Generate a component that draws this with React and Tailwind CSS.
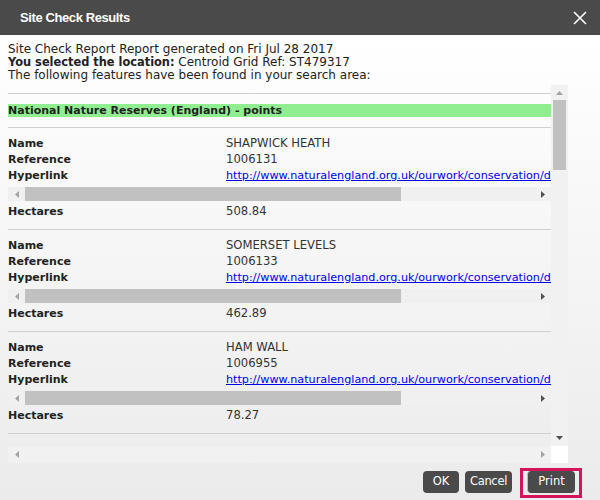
import React from "react";

const records = [
  { name: "SHAPWICK HEATH", reference: "1006131", hectares: "508.84" },
  { name: "SOMERSET LEVELS", reference: "1006133", hectares: "462.89" },
  { name: "HAM WALL", reference: "1006955", hectares: "78.27" },
];

const link =
  "http://www.naturalengland.org.uk/ourwork/conservation/designations/nnr/default.aspx";

const ArrowLeft = ({ color }) => (
  <svg width="4" height="7" viewBox="0 0 4 7">
    <polygon points="4,0 4,7 0,3.5" fill={color} />
  </svg>
);

const ArrowRight = ({ color }) => (
  <svg width="4" height="7" viewBox="0 0 4 7">
    <polygon points="0,0 0,7 4,3.5" fill={color} />
  </svg>
);

const Row = ({ label, children }) => (
  <div className="flex h-[16px] items-center whitespace-nowrap">
    <div className="w-[218px] shrink-0 text-[11px] font-bold text-[#222]">{label}</div>
    <div className="text-[11.6px] text-[#333]">{children}</div>
  </div>
);

const Record = ({ item }) => (
  <div>
    <div className="h-px bg-[#cfcfcf]" />
    <div className="pt-[8px]">
      <Row label="Name">{item.name}</Row>
      <Row label="Reference">{item.reference}</Row>
      <Row label="Hyperlink">
        <a href="#" className="text-[11.2px] text-[#0000ee] underline">
          {link}
        </a>
      </Row>
      {/* inner table scrollbar */}
      <div className="mt-[3px] flex h-[14px] items-center bg-[#f0f0f0]">
        <div className="flex w-[17px] justify-center">
          <ArrowLeft color="#a3a3a3" />
        </div>
        <div className="h-full w-[376px] bg-[#c1c1c1]" />
        <div className="flex-1" />
        <div className="flex w-[17px] justify-center">
          <ArrowRight color="#505050" />
        </div>
      </div>
      <div className="mt-[3px] mb-[9px]">
        <Row label="Hectares">{item.hectares}</Row>
      </div>
    </div>
  </div>
);

export default function App() {
  return (
    <div className="flex h-[500px] w-[600px] flex-col font-['DejaVu_Sans',sans-serif] text-[12px]">
      <div className="flex h-[35px] shrink-0 items-center justify-between bg-[#4a4a4a] pl-[20px] pr-[13px]">
        <span className="font-['Liberation_Sans',Arial,sans-serif] text-[13px] font-bold tracking-[-0.4px] text-white">
          Site Check Results
        </span>
        <svg width="14" height="14" viewBox="0 0 14 14">
          <path d="M1 1L13 13M13 1L1 13" stroke="#fff" strokeWidth="1.6" />
        </svg>
      </div>

      <div className="flex flex-1 flex-col bg-linear-to-b from-white to-[#ebebeb]">
        <div className="px-2 pt-2 leading-[13px] text-[#222]">
          <div>Site Check Report Report generated on Fri Jul 28 2017</div>
          <div>
            <span className="text-[11.4px] font-bold">You selected the location:</span> Centroid Grid Ref: ST479317
          </div>
          <div>The following features have been found in your search area:</div>
        </div>

        <div className="mx-2 mt-[3px] flex h-[378px] w-[560px] flex-col">
          <div className="flex h-[361px]">
            <div className="w-[543px] overflow-hidden pt-[8px]">
              <div className="h-px bg-[#cfcfcf]" />
              <div className="mt-[10px] h-[13px] bg-[#90ee90] text-[11px] font-bold leading-[13px] text-[#222]">
                National Nature Reserves (England) - points
              </div>
              <div className="mt-[10px]">
                {records.map((item) => (
                  <Record key={item.reference} item={item} />
                ))}
                <div className="h-px bg-[#cfcfcf]" />
              </div>
            </div>
            {/* vertical scrollbar */}
            <div className="flex w-[17px] flex-col items-center bg-[#f1f1f1]">
              <div className="flex h-[15px] items-center">
                <svg width="7" height="4" viewBox="0 0 7 4">
                  <polygon points="0,4 7,4 3.5,0" fill="#a3a3a3" />
                </svg>
              </div>
              <div className="h-[70px] w-[13px] bg-[#c1c1c1]" />
              <div className="flex-1" />
              <div className="flex h-[17px] items-center">
                <svg width="7" height="4" viewBox="0 0 7 4">
                  <polygon points="0,0 7,0 3.5,4" fill="#505050" />
                </svg>
              </div>
            </div>
          </div>
          <div className="flex h-[17px]">
            <div className="flex w-[543px] items-center bg-[#f1f1f1]">
              <div className="flex w-[17px] justify-center">
                <ArrowLeft color="#a3a3a3" />
              </div>
              <div className="flex-1" />
              <div className="flex w-[17px] justify-center">
                <ArrowRight color="#a3a3a3" />
              </div>
            </div>
            <div className="w-[17px] bg-white" />
          </div>
        </div>

        <div className="flex items-start justify-end pr-[18px] pt-[5px] text-[11.5px] text-white">
          <button className="mt-[3px] h-[22px] w-[36px] rounded-[4px] bg-[#4a4a4a]">OK</button>
          <button className="ml-[6px] mt-[3px] h-[22px] w-[47px] rounded-[4px] bg-[#4a4a4a] tracking-[-0.3px]">Cancel</button>
          <div className="ml-[8px] border-[3px] border-[#d4145a] px-[4px] pb-[2px]">
            <button className="h-[22px] w-[48px] rounded-[4px] border-l border-[#bbb] bg-[#4a4a4a]">Print</button>
          </div>
        </div>
      </div>
    </div>
  );
}
